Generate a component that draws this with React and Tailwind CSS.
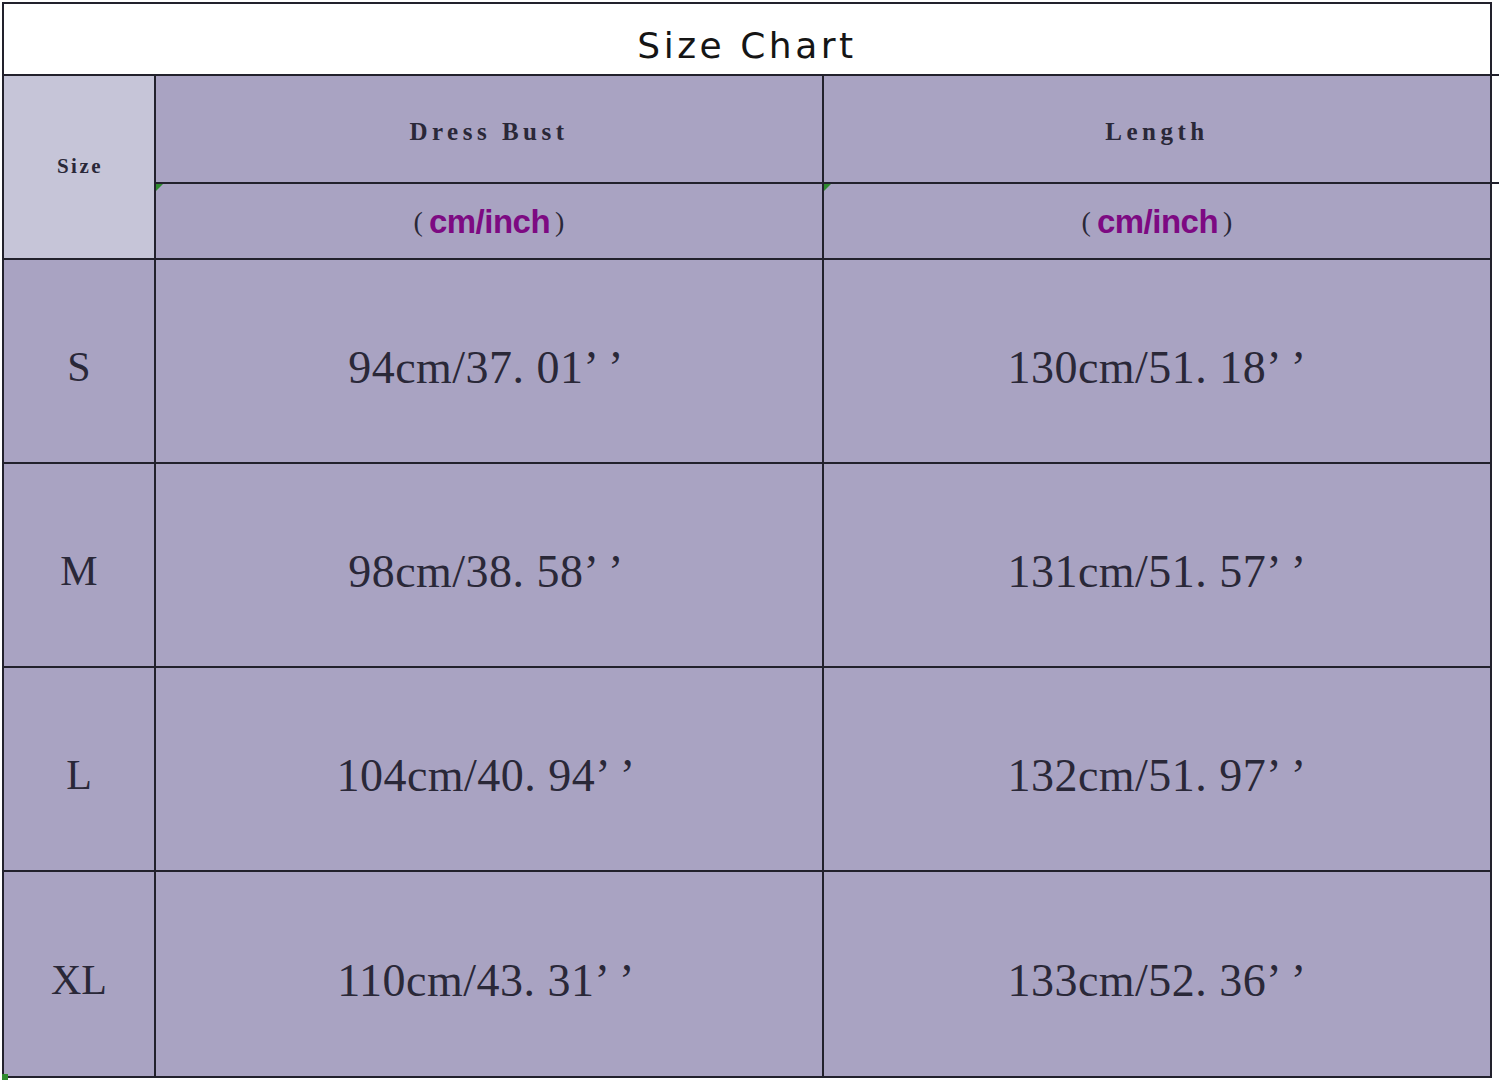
import React from 'react'

const rows = [
  { size: 'S', bust: '94cm/37. 01’ ’', length: '130cm/51. 18’ ’' },
  { size: 'M', bust: '98cm/38. 58’ ’', length: '131cm/51. 57’ ’' },
  { size: 'L', bust: '104cm/40. 94’ ’', length: '132cm/51. 97’ ’' },
  { size: 'XL', bust: '110cm/43. 31’ ’', length: '133cm/52. 36’ ’' },
]

const serif = { fontFamily: '"Liberation Serif", "DejaVu Serif", serif' }

const Corner = ({ className }) => (
  <span className={`absolute w-0 h-0 border-t-[7px] border-r-[7px] border-t-[#2f8a2f] border-r-transparent ${className}`} />
)

const Units = () => (
  <div className="flex items-center justify-center text-[#2a2838] mt-[2px]" style={serif}>
    <span className="text-[28px] pr-[6px]">(</span>
    <span
      className="text-[33px] font-bold text-[#7d0a82] tracking-[-0.5px]"
      style={{ fontFamily: '"Liberation Sans", Arial, sans-serif' }}
    >
      cm/inch
    </span>
    <span className="text-[28px] pl-[5px]">)</span>
  </div>
)

export default function App() {
  return (
    <div className="min-h-screen bg-white pt-[2px] pl-[2px]">
      <div className="relative w-[1490px] border-2 border-[#22212c]">
        {/* lines running past the right edge */}
        <span className="absolute top-[70px] -right-[9px] w-[8px] h-[2px] bg-[#22212c]" />
        <span className="absolute top-[178px] -right-[9px] w-[8px] h-[2px] bg-[#22212c]" />

        {/* Title */}
        <div className="h-[72px] border-b-2 border-[#22212c] flex items-center justify-center bg-white pt-[14px]">
          <span
            className="text-[36px] tracking-[3.5px] text-[#151515]"
            style={{ fontFamily: '"DejaVu Sans", "Noto Sans", sans-serif' }}
          >
            Size Chart
          </span>
        </div>

        <div className="grid grid-cols-[152px_668px_1fr] bg-[#a9a3c2] text-[#2a2838]">
          {/* Header */}
          <div className="row-span-2 bg-[#c6c5d8] border-r-2 border-b-2 border-[#22212c] flex items-center justify-center">
            <span className="text-[21px] font-bold tracking-[2.5px] pl-[2px]" style={serif}>Size</span>
          </div>
          <div className="h-[108px] border-r-2 border-b-2 border-[#22212c] flex items-center justify-center">
            <span className="text-[25px] font-bold tracking-[4.5px] mt-[6px]" style={serif}>Dress Bust</span>
          </div>
          <div className="h-[108px] border-b-2 border-[#22212c] flex items-center justify-center">
            <span className="text-[25px] font-bold tracking-[4.5px] mt-[6px]" style={serif}>Length</span>
          </div>
          <div className="relative h-[76px] border-r-2 border-b-2 border-[#22212c] flex items-center justify-center">
            <Corner className="top-0 left-0" />
            <Units />
          </div>
          <div className="relative h-[76px] border-b-2 border-[#22212c] flex items-center justify-center">
            <Corner className="top-0 left-0" />
            <Units />
          </div>

          {/* Body */}
          {rows.map((r, i) => {
            const last = i === rows.length - 1
            const b = last ? '' : 'border-b-2'
            return (
              <React.Fragment key={r.size}>
                <div className={`relative h-[204px] border-r-2 ${b} border-[#22212c] flex items-center justify-center`}>
                  {last && <span className="absolute -bottom-[4px] -left-[2px] w-[6px] h-[6px] bg-[#2f8a2f]" />}
                  <span className="text-[42px] mt-[12px]" style={serif}>{r.size}</span>
                </div>
                <div className={`h-[204px] border-r-2 ${b} border-[#22212c] flex items-center justify-center`}>
                  <span className="text-[46px] mt-[12px] pr-[6px] tracking-[0.5px]" style={serif}>{r.bust}</span>
                </div>
                <div className={`h-[204px] ${b} border-[#22212c] flex items-center justify-center`}>
                  <span className="text-[46px] mt-[12px] tracking-[0.5px]" style={serif}>{r.length}</span>
                </div>
              </React.Fragment>
            )
          })}
        </div>
      </div>
    </div>
  )
}
